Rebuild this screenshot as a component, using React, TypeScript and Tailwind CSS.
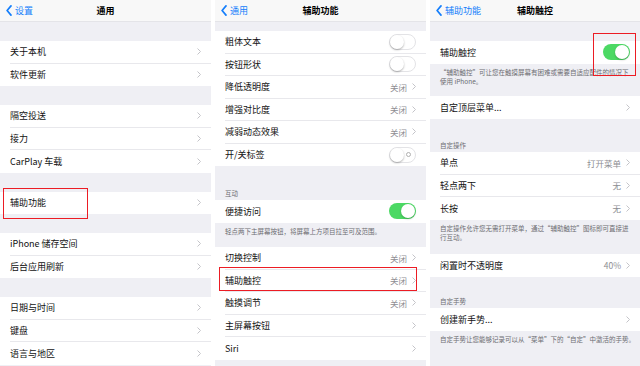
import React from 'react';

type Row = {
  label: string;
  value?: string;
  chevron?: boolean;
  toggle?: 'on' | 'off' | 'offLabel';
  mark?: string;
};

type Block =
  | { kind: 'gap'; h: string }
  | { kind: 'header'; text: string; h: string }
  | { kind: 'footer'; lines: string[]; h: string }
  | { kind: 'group'; rows: Row[] };

function Chevron() {
  return (
    <svg width="4" height="7" viewBox="0 0 4 7" className="shrink-0">
      <path d="M0.5 0.5 L3.5 3.5 L0.5 6.5" fill="none" stroke="#c4c4c9" strokeWidth="1" />
    </svg>
  );
}

function BackChevron() {
  return (
    <svg width="6" height="11" viewBox="0 0 6 11" className="shrink-0">
      <path
        d="M5 0.9 L1.1 5.5 L5 10.1"
        fill="none"
        stroke="#147efb"
        strokeWidth="1.7"
        strokeLinecap="round"
        strokeLinejoin="round"
      />
    </svg>
  );
}

function Toggle({ kind }: { kind: 'on' | 'off' | 'offLabel' }) {
  if (kind === 'on') {
    return (
      <div className="relative h-4 w-[27px] shrink-0 rounded-full bg-[#4cd964]">
        <div className="absolute right-[1px] top-[1px] h-[14px] w-[14px] rounded-full bg-white shadow-[0_1px_2px_rgba(0,0,0,0.25)]" />
      </div>
    );
  }
  return (
    <div className="relative h-4 w-[27px] shrink-0 rounded-full border border-[#e3e3e6] bg-white">
      <div className="absolute left-0 top-0 h-[14px] w-[14px] rounded-full bg-white shadow-[0_1px_2px_rgba(0,0,0,0.3)]" />
      {kind === 'offLabel' && (
        <div className="absolute right-[4px] top-[4.5px] h-[5px] w-[5px] rounded-full border border-[#b0b0b0]" />
      )}
    </div>
  );
}

// red annotation frame drawn over a row
function RedBox({ className }: { className: string }) {
  return <div className={`pointer-events-none absolute z-10 border-[1.5px] border-solid border-[#ec1c24] ${className}`} />;
}

function Cell({ row, last }: { row: Row; last: boolean }) {
  return (
    <div className="relative flex h-[22.5px] shrink-0 bg-white pl-[10px]">
      <div
        className={
          last
            ? 'flex flex-1 items-center pr-[10px]'
            : 'flex flex-1 items-center border-b border-[#e8e8ec] pr-[10px]'
        }
      >
        <span className="flex-1 text-[9px] leading-none text-[#111]">{row.label}</span>
        {row.value && (
          <span className="mr-[5px] text-[8.5px] leading-none text-[#8e8e93]">{row.value}</span>
        )}
        {row.chevron && <Chevron />}
        {row.toggle && <Toggle kind={row.toggle} />}
      </div>
      {row.mark && <RedBox className={row.mark} />}
    </div>
  );
}

function Panel({
  back,
  title,
  blocks,
  width,
}: {
  back: string;
  title: string;
  blocks: Block[];
  width: string;
}) {
  return (
    <div className={`relative flex h-[366px] ${width} shrink-0 flex-col overflow-hidden bg-[#efeff4]`}>
      <div className="grid h-[22px] shrink-0 grid-cols-[1fr_auto_1fr] items-center border-b border-[#e4e4e8] bg-[#f8f8f8]">
        <div className="flex items-center gap-[3px] pl-[6px] text-[9px] leading-none text-[#147efb]">
          <BackChevron />
          <span>{back}</span>
        </div>
        <div className="text-[9px] font-semibold leading-none text-black">{title}</div>
        <div />
      </div>
      {blocks.map((b, i) => {
        if (b.kind === 'gap') return <div key={i} className={`${b.h} shrink-0`} />;
        if (b.kind === 'header')
          return (
            <div key={i} className={`flex ${b.h} shrink-0 items-end pb-[4px] pl-[10px] text-[6.5px] leading-none text-[#6d6d72]`}>
              {b.text}
            </div>
          );
        if (b.kind === 'footer')
          return (
            <div key={i} className={`${b.h} shrink-0 pl-[10px] pr-[8px] pt-[4px] text-[6.5px] leading-[9px] text-[#6d6d72]`}>
              {b.lines.map((l, j) => (
                <div key={j} className="whitespace-nowrap">{l}</div>
              ))}
            </div>
          );
        return (
          <div key={i} className="flex shrink-0 flex-col">
            {b.rows.map((r, j) => (
              <Cell key={j} row={r} last={j === b.rows.length - 1} />
            ))}
          </div>
        );
      })}
    </div>
  );
}

const general: Block[] = [
  { kind: 'gap', h: 'h-[19px]' },
  { kind: 'group', rows: [{ label: '关于本机', chevron: true }, { label: '软件更新', chevron: true }] },
  { kind: 'gap', h: 'h-[19px]' },
  {
    kind: 'group',
    rows: [
      { label: '隔空投送', chevron: true },
      { label: '接力', chevron: true },
      { label: 'CarPlay 车载', chevron: true },
    ],
  },
  { kind: 'gap', h: 'h-[19px]' },
  {
    kind: 'group',
    rows: [{ label: '辅助功能', chevron: true, mark: 'left-[3px] top-[-3.5px] h-[31px] w-[85px]' }],
  },
  { kind: 'gap', h: 'h-[19px]' },
  {
    kind: 'group',
    rows: [
      { label: 'iPhone 储存空间', chevron: true },
      { label: '后台应用刷新', chevron: true },
    ],
  },
  { kind: 'gap', h: 'h-[19px]' },
  {
    kind: 'group',
    rows: [
      { label: '日期与时间', chevron: true },
      { label: '键盘', chevron: true },
      { label: '语言与地区', chevron: true },
    ],
  },
];

const accessibility: Block[] = [
  { kind: 'gap', h: 'h-[9px]' },
  {
    kind: 'group',
    rows: [
      { label: '粗体文本', toggle: 'off' },
      { label: '按钮形状', toggle: 'off' },
      { label: '降低透明度', value: '关闭', chevron: true },
      { label: '增强对比度', value: '关闭', chevron: true },
      { label: '减弱动态效果', value: '关闭', chevron: true },
      { label: '开/关标签', toggle: 'offLabel' },
    ],
  },
  { kind: 'header', text: '互动', h: 'h-[34px]' },
  { kind: 'group', rows: [{ label: '便捷访问', toggle: 'on' }] },
  { kind: 'footer', lines: ['轻点两下主屏幕按钮，将屏幕上方项目拉至可及范围。'], h: 'h-[24.5px]' },
  {
    kind: 'group',
    rows: [
      { label: '切换控制', value: '关闭', chevron: true },
      {
        label: '辅助触控',
        value: '关闭',
        chevron: true,
        mark: 'left-[4px] top-[-2.5px] h-[24px] w-[198px]',
      },
      { label: '触摸调节', value: '关闭', chevron: true },
      { label: '主屏幕按钮', chevron: true },
      { label: 'Siri', chevron: true },
    ],
  },
];

const assistive: Block[] = [
  { kind: 'gap', h: 'h-[19px]' },
  {
    kind: 'group',
    rows: [{ label: '辅助触控', toggle: 'on', mark: 'left-[163px] top-[-8px] h-[43px] w-[43px]' }],
  },
  {
    kind: 'footer',
    lines: ['“辅助触控”可让您在触摸屏幕有困难或需要自适应配件的情况下', '使用 iPhone。'],
    h: 'h-[32.5px]',
  },
  { kind: 'group', rows: [{ label: '自定顶层菜单...', chevron: true }] },
  { kind: 'header', text: '自定操作', h: 'h-[33.5px]' },
  {
    kind: 'group',
    rows: [
      { label: '单点', value: '打开菜单', chevron: true },
      { label: '轻点两下', value: '无', chevron: true },
      { label: '长按', value: '无', chevron: true },
    ],
  },
  {
    kind: 'footer',
    lines: ['自定操作允许您无需打开菜单，通过“辅助触控”图标即可直接进', '行互动。'],
    h: 'h-[34.5px]',
  },
  { kind: 'group', rows: [{ label: '闲置时不透明度', value: '40%', chevron: true }] },
  { kind: 'header', text: '自定手势', h: 'h-[31.5px]' },
  { kind: 'group', rows: [{ label: '创建新手势...', chevron: true }] },
  {
    kind: 'footer',
    lines: ['自定手势让您能够记录可以从“菜单”下的“自定”中激活的手势。'],
    h: 'h-[30px]',
  },
];

export default function App() {
  return (
    <div className="flex h-[366px] w-[640px] gap-[4px] overflow-hidden bg-white font-['Noto_Sans_CJK_SC','Noto_Sans',sans-serif]">
      <Panel back="设置" title="通用" blocks={general} width="w-[211px]" />
      <Panel back="通用" title="辅助功能" blocks={accessibility} width="w-[211px]" />
      <Panel back="辅助功能" title="辅助触控" blocks={assistive} width="w-[210px]" />
    </div>
  );
}
